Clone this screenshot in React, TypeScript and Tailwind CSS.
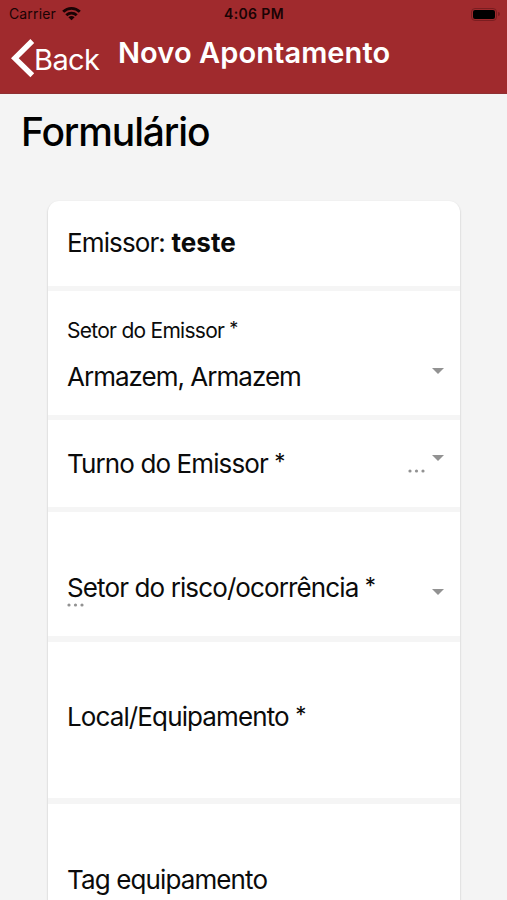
import * as React from "react";
import clsx from "clsx";

function StatusBar() {
  return (
    <div className="flex h-7 items-center justify-between pl-[9px] pr-[7px] text-[#190304]">
      <div className="flex w-[120px] items-center gap-[6px]">
        <span className="text-[14px] leading-7 tracking-[0.01em]">Carrier</span>
        <svg width="19" height="15" viewBox="0 0 19 15" className="-mt-[2px]" fill="none" stroke="currentColor" strokeWidth="2.9">
          <path d="M1.2 5.8C5.9 1.2 13.1 1.2 17.8 5.8" />
          <path d="M4.3 9.2C7.3 6.4 11.7 6.4 14.7 9.2" />
          <path d="M6.4 11.2C8.2 9.6 10.8 9.6 12.6 11.2L9.5 14.3Z" fill="currentColor" stroke="none" />
        </svg>
      </div>
      <span className="-ml-px text-[14px] font-semibold leading-7 tracking-[0.025em]">4:06 PM</span>
      <div className="flex w-[120px] items-center justify-end gap-px">
        <span className="flex h-[13px] w-[26px] rounded-[4px] border border-[#7a1d20] p-px">
          <span className="flex-1 rounded-[2px] bg-black" />
        </span>
        <span className="h-1 w-[2px] rounded-r-full bg-[#7a1d20]" />
      </div>
    </div>
  );
}

function Header() {
  return (
    <header className="h-[94px] border-b border-[#8f3033] bg-[#a02a2d]">
      <StatusBar />
      <div className="flex text-white">
        <button className="flex w-[118px] pl-[11px] pt-[10px]">
          <svg width="24" height="40" viewBox="0 0 24 40" fill="none" stroke="currentColor" strokeWidth="5.4">
            <path d="M21.3 3 3.8 20.2 21.3 37.3" />
          </svg>
          <span className="-ml-px pt-[4px] text-[29px] leading-9 tracking-[-0.02em]">Back</span>
        </button>
        <h1 className="pt-[7px] text-[29px] font-semibold leading-9 tracking-[0.003em]">Novo Apontamento</h1>
      </div>
    </header>
  );
}

function Caret({ className }: { className?: string }) {
  return (
    <svg width="12" height="6" viewBox="0 0 12 6" className={clsx("shrink-0", className)}>
      <path d="M0 0h12L6 6z" fill="#929292" />
    </svg>
  );
}

function Dots({ className }: { className?: string }) {
  return (
    <svg width="17" height="4" viewBox="0 0 17 4" className={clsx("shrink-0", className)} fill="#929292">
      <circle cx="2" cy="2" r="1.6" />
      <circle cx="8.5" cy="2" r="1.6" />
      <circle cx="15" cy="2" r="1.6" />
    </svg>
  );
}

function Required() {
  return <span className="align-[3px] text-[0.86em] leading-none">*</span>;
}

function Row({ className, children }: { className?: string; children: React.ReactNode }) {
  return (
    <div className={clsx("flex items-start justify-between border-[#f5f5f5] pl-[19px] pr-[16px]", className)}>
      {children}
    </div>
  );
}

export default function App() {
  return (
    <div className="h-[900px] w-[507px] overflow-hidden bg-[#f4f4f4] font-['Inter',sans-serif] text-[#0b0b0b]">
      <Header />
      <h2 className="pl-[21px] pt-[14px] text-[39px] font-medium leading-[48px] tracking-[-0.029em] text-black">
        Formulário
      </h2>
      <main className="ml-[48px] mt-[45px] h-[760px] w-[412px] rounded-t-[11px] bg-white text-[26px] leading-8 tracking-[-0.034em] shadow-[0_1px_2px_rgba(0,0,0,0.25)]">
        <Row className="h-[90px] border-b-[5px] pt-[26px]">
          <span>
            Emissor: <b className="font-bold tracking-[0.003em]">teste</b>
          </span>
        </Row>
        <Row className="h-[129px] border-b-[5px] pt-[28px]">
          <div className="flex flex-col gap-[18px]">
            <span className="text-[21px] leading-6 tracking-[-0.035em]">
              Setor do Emissor <Required />
            </span>
            <span className="tracking-[-0.038em]">Armazem, Armazem</span>
          </div>
          <Caret className="mt-[49px]" />
        </Row>
        <Row className="h-[92px] border-b-[5px] pt-[28px]">
          <span>
            Turno do Emissor <Required />
          </span>
          <div className="flex gap-[7px] pt-[7px]">
            <Dots className="mt-[14px]" />
            <Caret />
          </div>
        </Row>
        <Row className="h-[130px] border-b-[6px] pt-[60px]">
          <div className="flex flex-col">
            <span>
              Setor do risco/ocorrência <Required />
            </span>
            <Dots className="-mt-px" />
          </div>
          <Caret className="mt-[17px]" />
        </Row>
        <Row className="h-[162px] border-b-[6px] pt-[59px]">
          <span>
            Local/Equipamento <Required />
          </span>
        </Row>
        <Row className="pt-[60px]">
          <span>Tag equipamento</span>
        </Row>
      </main>
    </div>
  );
}
